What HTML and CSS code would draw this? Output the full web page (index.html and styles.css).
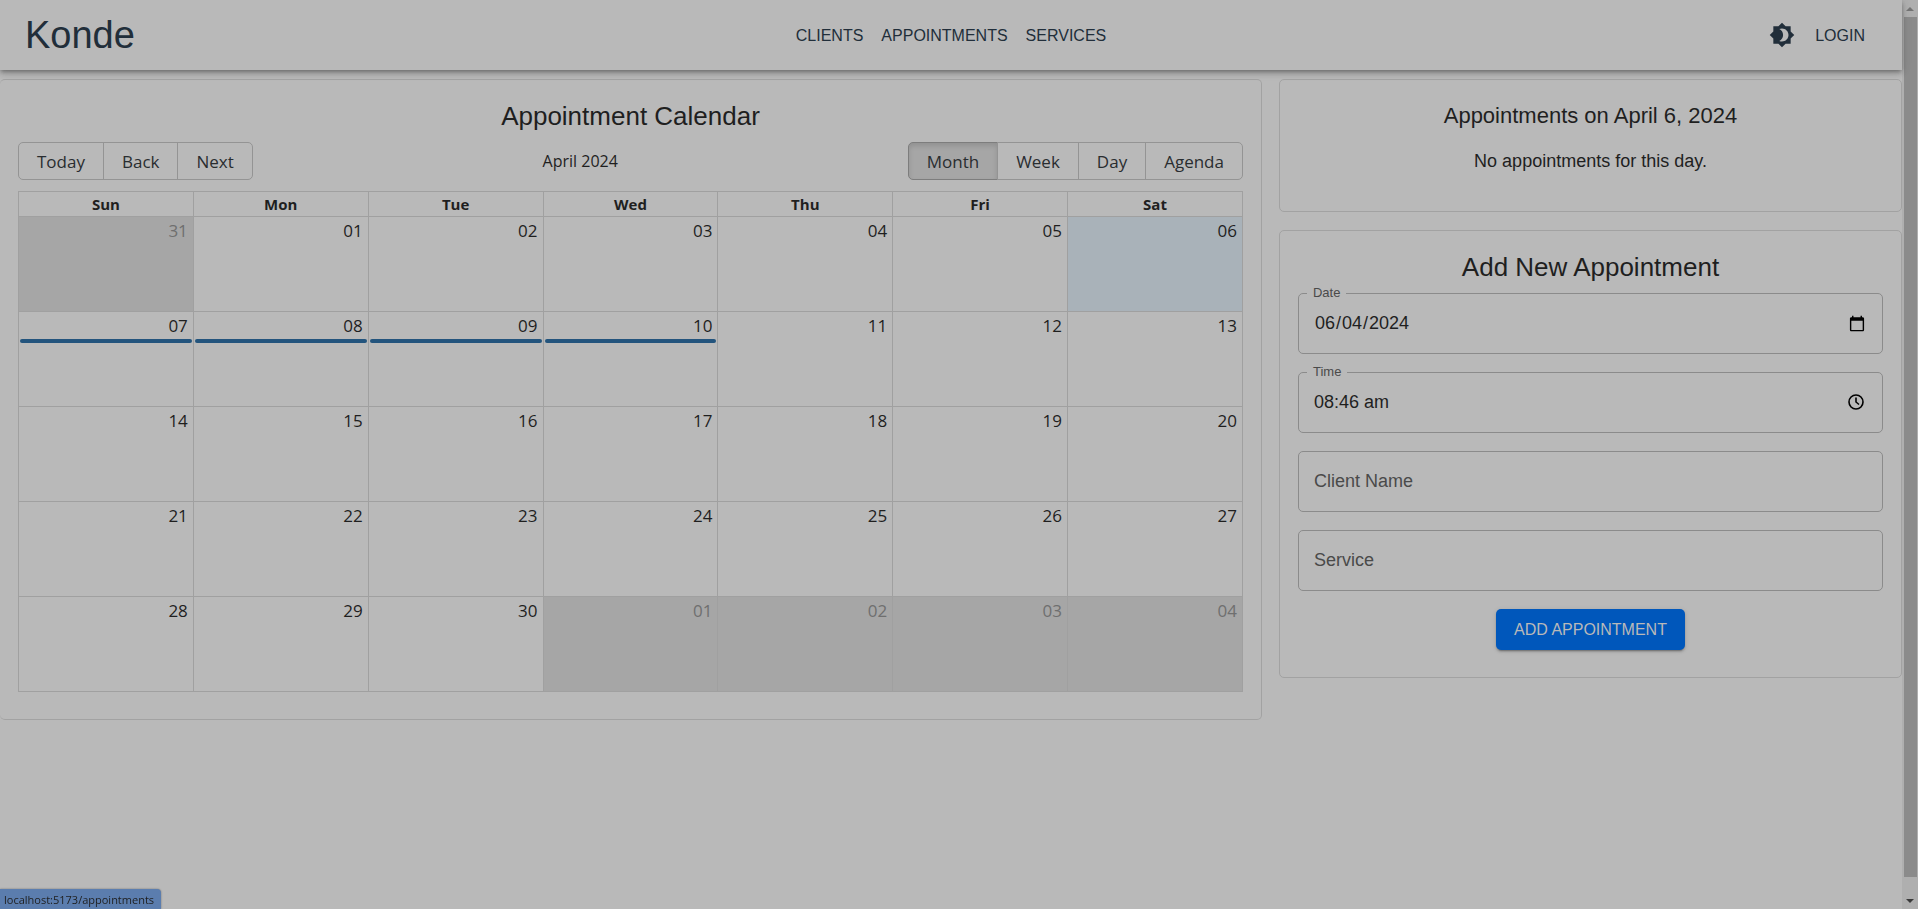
FILE: index.html
```html
<!DOCTYPE html>
<html lang="en">
<head>
<meta charset="utf-8">
<title>Konde</title>
<link rel="stylesheet" href="styles.css">
</head>
<body>
<div class="page">
  <header class="topbar">
    <div class="brand">Konde</div>
    <nav class="nav">
      <a class="nav-link" href="#clients">CLIENTS</a>
      <a class="nav-link" href="#appointments">APPOINTMENTS</a>
      <a class="nav-link" href="#services">SERVICES</a>
    </nav>
    <div class="account">
      <button class="icon-button" type="button" aria-label="Toggle theme">
        <svg class="theme-icon" viewBox="0 0 24 24" aria-hidden="true"><path d="M20 8.69V4h-4.69L12 .69 8.69 4H4v4.69L.69 12 4 15.31V20h4.69L12 23.31 15.31 20H20v-4.69L23.31 12 20 8.69zM12 18c-.89 0-1.74-.2-2.5-.55C11.56 16.5 13 14.42 13 12s-1.44-4.5-3.5-5.45C10.26 6.2 11.11 6 12 6c3.31 0 6 2.69 6 6s-2.69 6-6 6z"/></svg>
      </button>
      <a class="nav-link" href="#login">LOGIN</a>
    </div>
  </header>

  <main class="content">
    <section class="card calendar-card">
      <h1 class="title">Appointment Calendar</h1>
      <div class="toolbar">
        <div class="button-group">
          <button class="tool" type="button">Today</button>
          <button class="tool" type="button">Back</button>
          <button class="tool" type="button">Next</button>
        </div>
        <span class="toolbar-label">April 2024</span>
        <div class="button-group">
          <button class="tool active" type="button">Month</button>
          <button class="tool" type="button">Week</button>
          <button class="tool" type="button">Day</button>
          <button class="tool" type="button">Agenda</button>
        </div>
      </div>
      <table class="month">
        <thead>
          <tr><th>Sun</th><th>Mon</th><th>Tue</th><th>Wed</th><th>Thu</th><th>Fri</th><th>Sat</th></tr>
        </thead>
        <tbody>
          <tr><td class="off">31</td><td>01</td><td>02</td><td>03</td><td>04</td><td>05</td><td class="today">06</td></tr>
          <tr><td>07<div class="event"></div></td><td>08<div class="event"></div></td><td>09<div class="event"></div></td><td>10<div class="event"></div></td><td>11</td><td>12</td><td>13</td></tr>
          <tr><td>14</td><td>15</td><td>16</td><td>17</td><td>18</td><td>19</td><td>20</td></tr>
          <tr><td>21</td><td>22</td><td>23</td><td>24</td><td>25</td><td>26</td><td>27</td></tr>
          <tr><td>28</td><td>29</td><td>30</td><td class="off">01</td><td class="off">02</td><td class="off">03</td><td class="off">04</td></tr>
        </tbody>
      </table>
    </section>

    <div class="side">
      <section class="card">
        <h2 class="subtitle">Appointments on April 6, 2024</h2>
        <p class="empty">No appointments for this day.</p>
      </section>

      <section class="card">
        <h2 class="title">Add New Appointment</h2>
        <form class="form">
          <div class="field">
            <label class="field-label" for="date">Date</label>
            <input class="field-input" id="date" type="date" value="2024-06-04">
          </div>
          <div class="field">
            <label class="field-label" for="time">Time</label>
            <input class="field-input" id="time" type="text" value="08:46 am">
            <button class="picker" type="button" aria-label="Choose time">
              <svg class="picker-icon" viewBox="0 0 18 18" aria-hidden="true"><circle cx="9" cy="9" r="7"/><path d="M9 4.500V9l3 2.500"/></svg>
            </button>
          </div>
          <div class="field">
            <input class="field-input" type="text" placeholder="Client Name" aria-label="Client Name">
          </div>
          <div class="field">
            <input class="field-input" type="text" placeholder="Service" aria-label="Service">
          </div>
          <button class="submit" type="button">ADD APPOINTMENT</button>
        </form>
      </section>
    </div>
  </main>
</div>

<div class="scrollbar" aria-hidden="true">
  <svg class="arrow arrow-up" viewBox="0 0 16 17"><path d="M8 7l4 4H4z"/></svg>
  <div class="thumb"></div>
  <svg class="arrow" viewBox="0 0 16 17"><path d="M8 11L4 7h8z"/></svg>
</div>

<div class="status">localhost:5173/appointments</div>
</body>
</html>
```
FILE: styles.css
```css
* {
  box-sizing: border-box;
}

body {
  margin: 0;
  height: 100vh;
  display: flex;
  overflow: hidden;
  background: #b9b9b9;
  color: #1f1f1f;
  font-family: "Liberation Sans", Arial, sans-serif;
  font-size: 18px;
  line-height: 27px;
}

button,
input {
  font: inherit;
  color: inherit;
}

.page {
  flex: 1;
  min-width: 0;
}

.topbar {
  position: relative;
  display: grid;
  grid-template-columns: 1fr auto 1fr;
  align-items: center;
  height: 70px;
  padding: 0 25px;
  background: #b9b9b9;
  color: #212e3a;
  box-shadow: 0 2px 4px -1px rgba(0, 0, 0, 0.3), 0 4px 5px rgba(0, 0, 0, 0.14), 0 1px 10px rgba(0, 0, 0, 0.12);
}

.brand {
  font-size: 38px;
  line-height: 48px;
}

.nav,
.account {
  display: flex;
  align-items: center;
  gap: 18px;
}

.account {
  justify-content: flex-end;
  gap: 20px;
  padding-right: 12px;
}

.nav-link {
  color: inherit;
  font-size: 16px;
  text-decoration: none;
}

.icon-button {
  display: flex;
  padding: 0;
  border: 0;
  background: none;
}

.theme-icon {
  width: 26px;
  height: 26px;
  fill: currentColor;
}

.content {
  display: grid;
  grid-template-columns: calc((100% + 18px) * 2 / 3 - 18px) 1fr;
  gap: 17px;
  align-items: start;
  padding-top: 9px;
}

.side {
  display: grid;
  gap: 18px;
}

.card {
  padding: 18px 18px 27px;
  border: 1px solid #a2a2a2;
  border-radius: 5px;
}

.calendar-card {
  border-left-width: 0;
}

.title,
.subtitle {
  margin: 0 0 8px;
  font-size: 26px;
  font-weight: 400;
  line-height: 36px;
  text-align: center;
}

.subtitle {
  font-size: 22px;
}

.empty {
  margin: 14px 0 9px;
  text-align: center;
}

.toolbar {
  display: grid;
  grid-template-columns: auto 1fr auto;
  align-items: center;
  margin-bottom: 11px;
  font-family: "Open Sans", "Noto Sans", sans-serif;
  font-size: 17px;
}

.toolbar-label {
  text-align: center;
  font-size: 16px;
}

.button-group {
  display: flex;
}

.tool {
  height: 38px;
  padding: 0 18px;
  border: 1px solid #949494;
  margin-left: -1px;
  background: none;
  color: #292d30;
  font-weight: 500;
}

.tool:first-child {
  margin-left: 0;
  border-radius: 5px 0 0 5px;
}

.tool:last-child {
  border-radius: 0 5px 5px 0;
}

.tool.active {
  border-color: #7d7d7d;
  background: #a6a6a6;
  box-shadow: inset 0 3px 5px rgba(0, 0, 0, 0.125);
}

.month {
  width: 100%;
  table-layout: fixed;
  border-collapse: collapse;
  font-family: "Open Sans", "Noto Sans", sans-serif;
}

.month th,
.month td {
  padding: 0;
  border: 1px solid #a0a0a0;
}

.month th {
  height: 25px;
  font-size: 15px;
  line-height: 24px;
}

.month td {
  height: 95px;
  padding-right: 5px;
  font-size: 17px;
  font-weight: 500;
  text-align: right;
  vertical-align: top;
}

.month .off {
  background: #a6a6a6;
  color: #6f6f6f;
}

.month .today {
  background: #a9b2b9;
}

.event {
  height: 4px;
  margin: 0 -4px 0 1px;
  border-radius: 2px;
  background: #23547d;
}

.form {
  display: grid;
  gap: 18px;
}

.field {
  position: relative;
}

.field-input {
  display: block;
  width: 100%;
  height: 61px;
  padding: 0 14px 0 15px;
  border: 1px solid #8b8b8b;
  border-radius: 5px;
  background: none;
}

.field-input::placeholder {
  color: #4a4a4a;
  opacity: 1;
}

.field-label {
  position: absolute;
  top: -9px;
  left: 9px;
  padding: 0 6px;
  background: #b9b9b9;
  color: #4a4a4a;
  font-size: 13px;
  line-height: 18px;
}

.picker {
  position: absolute;
  top: 21px;
  right: 18px;
  display: flex;
  padding: 0;
  border: 0;
  background: none;
}

.picker-icon {
  width: 18px;
  height: 18px;
  fill: none;
  stroke: #000;
  stroke-width: 1.6;
}

.submit {
  justify-self: center;
  height: 41px;
  padding: 0 18px;
  border: 0;
  border-radius: 5px;
  background: #0057bb;
  color: #b9b9b9;
  font-size: 16px;
  box-shadow: 0 3px 1px -2px rgba(0, 0, 0, 0.2), 0 2px 2px rgba(0, 0, 0, 0.14), 0 1px 5px rgba(0, 0, 0, 0.12);
}

.scrollbar {
  display: flex;
  flex-direction: column;
  width: 16px;
  background: #afafaf;
}

.arrow {
  height: 17px;
  fill: #3a3a3a;
}

.arrow-up {
  fill: #747474;
}

.thumb {
  flex: 1;
  margin: 0 1px 15px 2px;
  background: #8b8b8b;
}

.status {
  position: fixed;
  left: 0;
  bottom: 0;
  padding: 2px 7px 0 4px;
  border-radius: 0 4px 0 0;
  background: #5b7dae;
  box-shadow: 0 0 2px rgba(0, 0, 0, 0.4);
  font-family: "Open Sans", "Noto Sans", sans-serif;
  font-size: 11px;
  line-height: 18px;
}
```
